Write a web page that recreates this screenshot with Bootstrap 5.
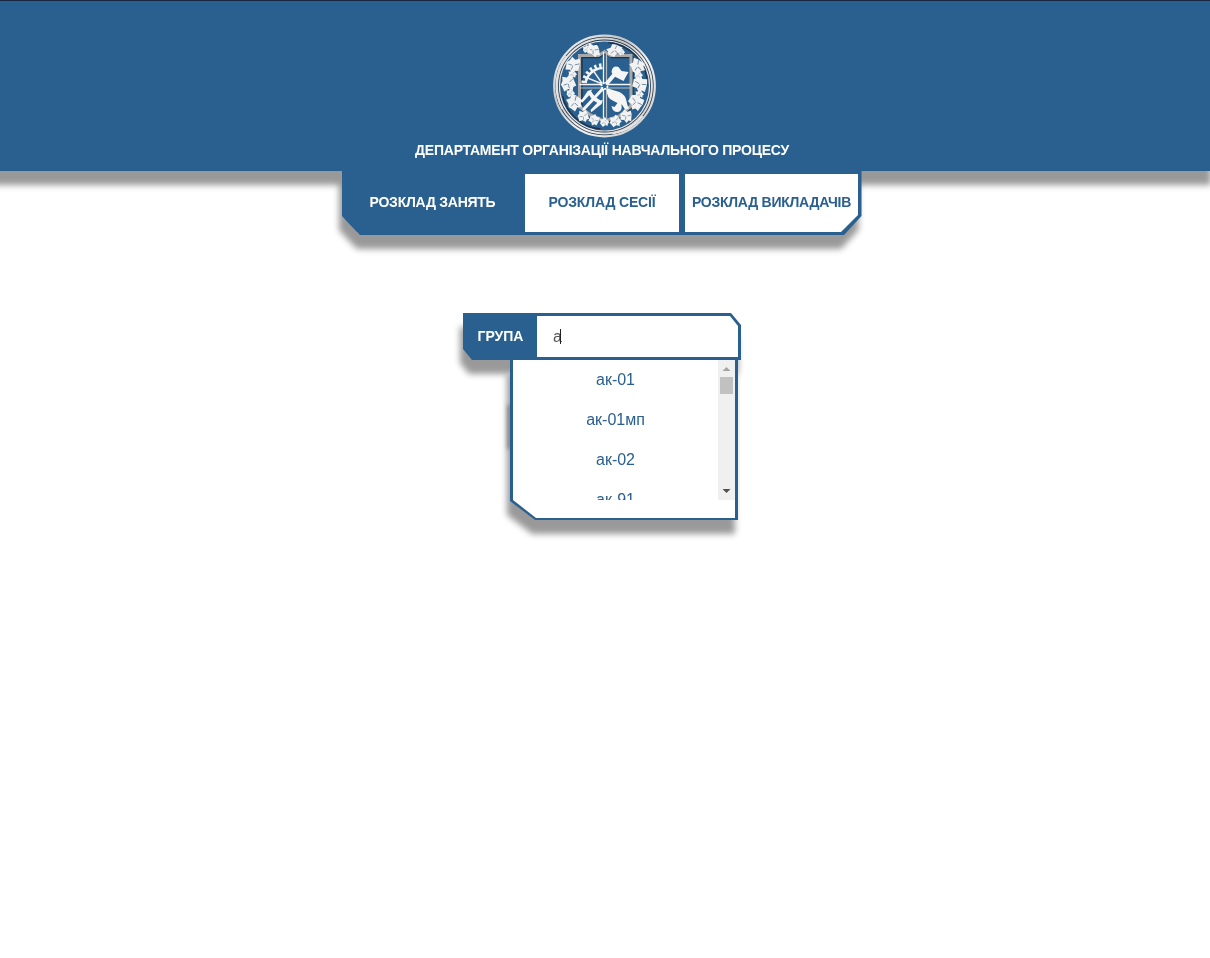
<!DOCTYPE html>
<html lang="uk">
<head>
<meta charset="utf-8">
<meta name="viewport" content="width=device-width, initial-scale=1">
<title>Розклад занять</title>
<link rel="stylesheet" href="https://cdn.jsdelivr.net/npm/bootstrap@5.3.0/dist/css/bootstrap.min.css">
<style>
:root{--brand:#29608f;--cast:drop-shadow(-3px 14px 3px #999)}
body{font-family:"Liberation Sans",Arial,sans-serif;background:#fff;overflow:hidden;min-height:100vh}
.top-shade{filter:var(--cast);position:relative}
.top-bar{height:171px;margin:0 -4px;background:var(--brand);border-top:1px solid #152744;padding-top:33px}
.emblem{width:104px;height:104px;margin-right:2px}
.dept{font-size:14px;font-weight:700;line-height:16px;color:#fff;margin:4px 6px 0 0;letter-spacing:-.23px}
.tabs{width:520px;height:64px;margin-left:342px;background:var(--brand);clip-path:polygon(0 0,519.5px 0,519.5px 45px,502px 100%,18px 100%,0 45px)}
.tab-link{height:58px;margin-top:3px;font-size:14px;font-weight:700;letter-spacing:-.25px;color:var(--brand);text-decoration:none;background:#fff;padding-bottom:2px}
.tab-link.active{background:var(--brand);color:#fff}
.tab-a{width:177px;margin-left:3px;margin-right:3px;padding-right:2px}
.tab-b{width:154px;margin-right:6px;letter-spacing:-.15px}
.tab-c{width:173px;clip-path:polygon(0 0,100% 0,100% 41px,156px 100%,0 100%)}
.finder{width:278px;margin:78px 0 0 463px}
.field-shade{filter:var(--cast)}
.field{height:47px;background:var(--brand);clip-path:polygon(0 0,268px 0,100% 12px,100% 100%,9px 100%,0 36px)}
.field-label{width:74px;color:#fff;font-weight:700;font-size:14px;padding-left:1px}
.field-input{width:201px;height:41px;margin-top:3px;padding-left:16px;background:#fff;color:#555;font-size:16px;clip-path:polygon(0 0,193px 0,100% 10px,100% 100%,0 100%)}
.caret{width:1px;height:15px;margin-left:-2px;background:#222}
.list-shade{position:relative;margin-left:47px;width:228px}
.list-shade::before{content:"";position:absolute;left:0;top:46px;width:4px;height:42px;box-shadow:-1px 0 4px 1px #444}
.list-cast{position:relative;filter:var(--cast)}
.list-box{height:160px;background:var(--brand);padding:0 3px;clip-path:polygon(0 0,100% 0,100% 100%,25px 100%,0 141px)}
.list-in{height:158px;background:#fff;clip-path:polygon(0 0,100% 0,100% 100%,23px 100%,0 140px)}
.options{height:140px;overflow:hidden;width:205px}
.option{height:40px;line-height:40px;text-align:center;color:var(--brand);font-size:16px}
.scroll{width:17px;height:140px;background:#f0f0f0}
.thumb{width:13px;height:17px;background:#c1c1c1}
</style>
</head>
<body>
<header class="top-shade">
  <div class="top-bar d-flex flex-column align-items-center">
    <svg class="emblem flex-shrink-0" viewBox="0 0 104 104" fill="none">
      <defs>
        <linearGradient id="metal" x1="0" y1="0" x2="1" y2="1"><stop stop-color="#fff"/><stop offset=".35" stop-color="#c4c4c4"/><stop offset=".6" stop-color="#f3f3f3"/><stop offset="1" stop-color="#c3c3c3"/></linearGradient>
        <g id="leaf"><path fill="#f2f2f2" d="M0-9 4-6 6-3 9 1 6 3 6 7 1 6-3 9-6 5-8 3-7-1-8-5-3-5Z"/><path stroke="#6b87a0" stroke-width=".9" d="m-5 3 4-2m2-2 3-4M0 1l2 4"/></g>
      </defs>
      <g transform="translate(.5)">
      <circle cx="52" cy="52" r="47.500" stroke="#24374a" stroke-width="6"/>
      <circle cx="52" cy="52" r="50.300" stroke="url(#metal)" stroke-width="2.200"/>
      <circle cx="52" cy="52" r="47.400" stroke="url(#metal)" stroke-width="2"/>
      <circle cx="52" cy="52" r="45" stroke="#e8e8e8" stroke-width="1.200"/>
      <path stroke="#e4e4e4" stroke-width="2" d="M14 22A48.400 48.400 0 0 0 10 75M90 82A48.400 48.400 0 0 1 60 99.500"/>
      <path stroke="#1c3146" stroke-width="1.300" d="M56 8.500a43 43 0 0 1 39 43M29 16l17-6M10 62A43 43 0 0 0 48 95"/>
      <path stroke="#1d344b" stroke-width="1.300" d="M29.500 24V72M29 23.500h18l6-4 6 4h18M80.500 22v51L67 83l-14 6"/>
      <path stroke="#a9a9a9" stroke-width="3" d="M27 74V21.500h19l6-4 6 4h20.500V72L67 82l-15 5-14-6-12-9"/>
      <path stroke="#f3f3f3" stroke-width="1.300" d="M51 18v66M27 50.500h51"/><path stroke="#bcbcbc" stroke-width="1.200" d="M54 18v66M27 54h51"/>
      <g>
        <use href="#leaf" transform="translate(41 16) rotate(35) scale(.95 .7)"/><use href="#leaf" transform="translate(62 16) rotate(-20) scale(.95 .7)"/>
        <use href="#leaf" transform="translate(34 15) scale(.45)"/><use href="#leaf" transform="translate(69 18) scale(.4)"/>
        <use href="#leaf" transform="translate(21 31) rotate(45) scale(.85 1)"/><use href="#leaf" transform="translate(16 49) rotate(10) scale(.9 1)"/><use href="#leaf" transform="translate(22 68) rotate(-20) scale(.9 1)"/>
        <use href="#leaf" transform="translate(20 40) scale(.5)"/><use href="#leaf" transform="translate(18 59) scale(.5)"/>
        <use href="#leaf" transform="translate(85 32) rotate(-25) scale(.85 1)"/><use href="#leaf" transform="translate(88 50) rotate(55) scale(1 .9)"/><use href="#leaf" transform="translate(84 68) rotate(75) scale(1 .9)"/>
        <use href="#leaf" transform="translate(86 41) scale(.5)"/><use href="#leaf" transform="translate(87 60) scale(.5)"/>
        <use href="#leaf" transform="translate(31 82) rotate(20) scale(.7)"/><use href="#leaf" transform="translate(42 86) rotate(65) scale(.65)"/><use href="#leaf" transform="translate(52 88) scale(.55)"/><use href="#leaf" transform="translate(63 87) scale(.7)"/><use href="#leaf" transform="translate(74 82) rotate(40) scale(.75)"/>
      </g>
      <path stroke="#f5f5f5" stroke-width="2.500" d="M33 49a18 18 0 0 1 17-15"/><path stroke="#f5f5f5" stroke-width="3.500" stroke-dasharray="2.500 2.500" d="M30.500 49a21 21 0 0 1 20-18"/><path stroke="#eee" stroke-width="1.400" d="m50 50-15-6m15 6-9-13"/>
      <path stroke="#f5f5f5" stroke-width="4" d="m53 51 11-13"/><path fill="#f5f5f5" d="M59 38Q60 31 66 33l3 4 7 1-5 9-10-5Z"/>
      <g transform="translate(51 54) rotate(43)" fill="#f5f5f5"><path d="M-1.500 0h3v12l5-1 1-2 2 4-2 13-2-1 0-10-4 1 0 13-1.500 2-1.500-2 0-13-4-1 0 10-2 1-2-13 2-4 1 2 5 1Z"/></g>
      <path fill="#f5f5f5" d="M54 54q6 2 13 4 6 3 7 9 1 6 3 7l-4 2-4-6q1 8-4 8-5 0-6-6l3 1 3-4-4-2q-7-2-7-13Z"/>
      <circle cx="52" cy="52" r="3" fill="#29608f" stroke="#fff" stroke-width="1.800" stroke-dasharray="2 1"/>
      </g>
    </svg>
    <div class="dept text-nowrap">ДЕПАРТАМЕНТ ОРГАНІЗАЦІЇ НАВЧАЛЬНОГО ПРОЦЕСУ</div>
  </div>
  <nav class="tabs d-flex">
    <a href="#" class="tab-link tab-a active d-flex align-items-center justify-content-center text-nowrap"><span>РОЗКЛАД ЗАНЯТЬ</span></a>
    <a href="#" class="tab-link tab-b d-flex align-items-center justify-content-center text-nowrap"><span>РОЗКЛАД СЕСІЇ</span></a>
    <a href="#" class="tab-link tab-c d-flex align-items-center justify-content-center text-nowrap"><span>РОЗКЛАД ВИКЛАДАЧІВ</span></a>
  </nav>
</header>
<main class="finder">
  <div class="field-shade"><div class="field d-flex">
    <div class="field-label d-flex align-items-center justify-content-center">ГРУПА</div>
    <div class="field-input d-flex align-items-center"><span>а</span><span class="caret"></span></div>
  </div></div>
  <div class="list-shade"><div class="list-cast"><div class="list-box"><div class="list-in d-flex align-items-start">
    <div class="options">
      <div class="option">ак-01</div><div class="option">ак-01мп</div><div class="option">ак-02</div><div class="option">ак-91</div>
    </div>
    <div class="scroll d-flex flex-column align-items-center justify-content-between">
      <svg width="17" height="17" viewBox="0 0 17 17"><path fill="#a3a3a3" d="m4.500 11 4-4 4 4Z"/></svg>
      <div class="thumb mb-auto"></div>
      <svg width="17" height="17" viewBox="0 0 17 17"><path fill="#505050" d="m4.500 6 4 4 4-4Z"/></svg>
    </div>
  </div></div></div></div>
</main>
<script src="https://cdn.jsdelivr.net/npm/bootstrap@5.3.0/dist/js/bootstrap.bundle.min.js"></script>
</body>
</html>
